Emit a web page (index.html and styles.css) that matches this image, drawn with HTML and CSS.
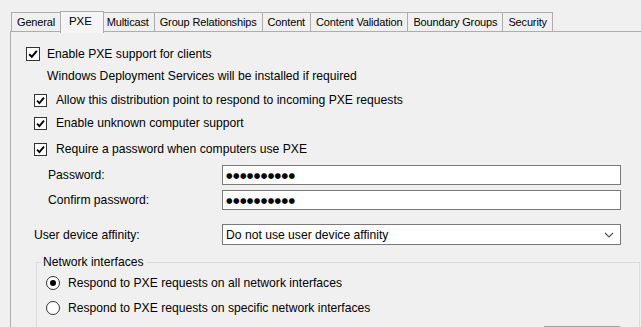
FILE: index.html
```html
<!DOCTYPE html>
<html lang="en">
<head>
    <meta charset="UTF-8">
    <title>Distribution Point Properties - PXE</title>
    <link rel="stylesheet" href="styles.css">
</head>
<body>
    <div class="tabs">
        <div class="tab">General</div>
        <div class="tab active">PXE</div>
        <div class="tab">Multicast</div>
        <div class="tab">Group Relationships</div>
        <div class="tab">Content</div>
        <div class="tab">Content Validation</div>
        <div class="tab">Boundary Groups</div>
        <div class="tab">Security</div>
    </div>

    <div class="panel">
        <label class="check-row top-level">
            <span class="checkbox checked">
                <svg viewBox="0 0 12 12" width="12" height="12"><path d="M2.2 6.2 L4.8 8.8 L9.8 2.8" fill="none" stroke="#000" stroke-width="2"/></svg>
            </span>
            Enable PXE support for clients
        </label>
        <div class="note">Windows Deployment Services will be installed if required</div>

        <label class="check-row sub cb-allow">
            <span class="checkbox checked">
                <svg viewBox="0 0 12 12" width="11" height="11"><path d="M2.2 6.2 L4.8 8.8 L9.8 2.8" fill="none" stroke="#000" stroke-width="2"/></svg>
            </span>
            Allow this distribution point to respond to incoming PXE requests
        </label>
        <label class="check-row sub cb-unknown">
            <span class="checkbox checked">
                <svg viewBox="0 0 12 12" width="11" height="11"><path d="M2.2 6.2 L4.8 8.8 L9.8 2.8" fill="none" stroke="#000" stroke-width="2"/></svg>
            </span>
            Enable unknown computer support
        </label>
        <label class="check-row sub cb-password">
            <span class="checkbox checked">
                <svg viewBox="0 0 12 12" width="11" height="11"><path d="M2.2 6.2 L4.8 8.8 L9.8 2.8" fill="none" stroke="#000" stroke-width="2"/></svg>
            </span>
            Require a password when computers use PXE
        </label>

        <div class="field pw-row">
            <span class="field-label indent">Password:</span>
            <div class="textbox"><span class="dots">●●●●●●●●●●</span></div>
        </div>
        <div class="field confirm-row">
            <span class="field-label indent">Confirm password:</span>
            <div class="textbox"><span class="dots">●●●●●●●●●●</span></div>
        </div>
        <div class="field affinity-row">
            <span class="field-label">User device affinity:</span>
            <div class="combo">
                <span>Do not use user device affinity</span>
                <svg class="chevron" viewBox="0 0 10 6" width="10" height="6"><path d="M1 1 L5 5 L9 1" fill="none" stroke="#555" stroke-width="1.2"/></svg>
            </div>
        </div>

        <fieldset class="group">
            <legend>Network interfaces</legend>
            <label class="radio-row">
                <span class="radio selected"></span>
                Respond to PXE requests on all network interfaces
            </label>
            <label class="radio-row second">
                <span class="radio"></span>
                Respond to PXE requests on specific network interfaces
            </label>
            <div class="btn-edge"></div>
        </fieldset>
    </div>
</body>
</html>
```

FILE: styles.css
```css
* {
    margin: 0;
    padding: 0;
    box-sizing: border-box;
}

body {
    background: #f0f0f0;
    font-family: 'Liberation Sans', Arial, sans-serif;
    font-size: 12.15px;
    color: #000;
    width: 641px;
    height: 327px;
    overflow: hidden;
}

/* tab strip */
.tabs {
    display: flex;
    align-items: flex-end;
    padding: 10px 0 0 11px;
    height: 32px;
}

.tab {
    height: 19px;
    padding: 0 5px;
    line-height: 19px;
    font-size: 11px;
    letter-spacing: -0.15px;
    border: 1px solid #adadad;
    border-left: none;
    border-bottom: none;
    background: #f0f0f0;
    margin-bottom: 1px;
}

.tab:first-child {
    border-left: 1px solid #adadad;
}

.tab.active {
    height: 22px;
    margin: 0 -2px -1px -1px;
    padding: 0 11px 0 8px;
    line-height: 19px;
    background: #f5f5f5;
    border-left: 1px solid #adadad;
    position: relative;
    z-index: 1;
    font-size: 11.5px;
}

.tab.active + .tab {
    border-left: none;
}

/* page panel */
.panel {
    margin-left: 10px;
    margin-top: -1px;
    border-left: 1px solid #adadad;
    border-top: 1px solid #adadad;
    padding-top: 12px;
}

.check-row {
    display: flex;
    align-items: center;
    height: 20px;
    gap: 7px;
}

.checkbox {
    display: flex;
    align-items: center;
    justify-content: center;
    width: 13px;
    height: 13px;
    background: #fff;
    border: 1px solid #333;
}

.top-level {
    margin-left: 15px;
}

.top-level .checkbox {
    width: 14px;
    height: 14px;
}

.note {
    height: 20px;
    line-height: 20px;
    margin-top: 2px;
    padding-left: 36px;
}

.sub {
    margin-left: 23px;
    gap: 9px;
}

.cb-allow { margin-top: 4px; }
.cb-unknown { margin-top: 3px; }
.cb-password { margin-top: 6px; }

.field {
    display: grid;
    grid-template-columns: 211px 1fr;
    align-items: center;
    margin-right: 20px;
}

.field-label {
    padding-left: 23px;
}

.field-label.indent {
    padding-left: 37px;
}

.pw-row { margin-top: 6px; }
.confirm-row { margin-top: 5px; }
.affinity-row { margin-top: 14px; }

.textbox {
    height: 20px;
    background: #fff;
    border: 1px solid #7a7a7a;
    display: flex;
    align-items: center;
    padding-left: 3px;
}

.dots {
    font-family: 'DejaVu Sans', sans-serif;
    font-size: 7.5px;
    letter-spacing: 0.4px;
}

.combo {
    height: 21px;
    background: #fff;
    border: 1px solid #7a7a7a;
    display: flex;
    align-items: center;
    justify-content: space-between;
    padding: 0 6px 0 3px;
}

.chevron {
    margin-top: 1px;
}

/* network interfaces group box */
.group {
    margin: 10px 1px 0 25px;
    border: 1px solid #dcdcdc;
    border-bottom: none;
    padding: 4px 19px 0 9px;
    min-width: 0;
}

.group legend {
    padding: 0 2px;
    margin-left: -5px;
    line-height: 14px;
}

.radio-row {
    display: flex;
    align-items: center;
    height: 20px;
    gap: 8px;
}

.radio-row.second {
    margin-top: 5px;
}

.radio {
    width: 14px;
    height: 14px;
    border-radius: 50%;
    border: 1px solid #333;
    background: #fff;
    display: flex;
    align-items: center;
    justify-content: center;
}

.radio.selected::after {
    content: '';
    width: 6px;
    height: 6px;
    border-radius: 50%;
    background: #000;
}

.btn-edge {
    margin: 8px 0 0 auto;
    width: 76px;
    border-top: 1px solid #a0a0a0;
}
```
